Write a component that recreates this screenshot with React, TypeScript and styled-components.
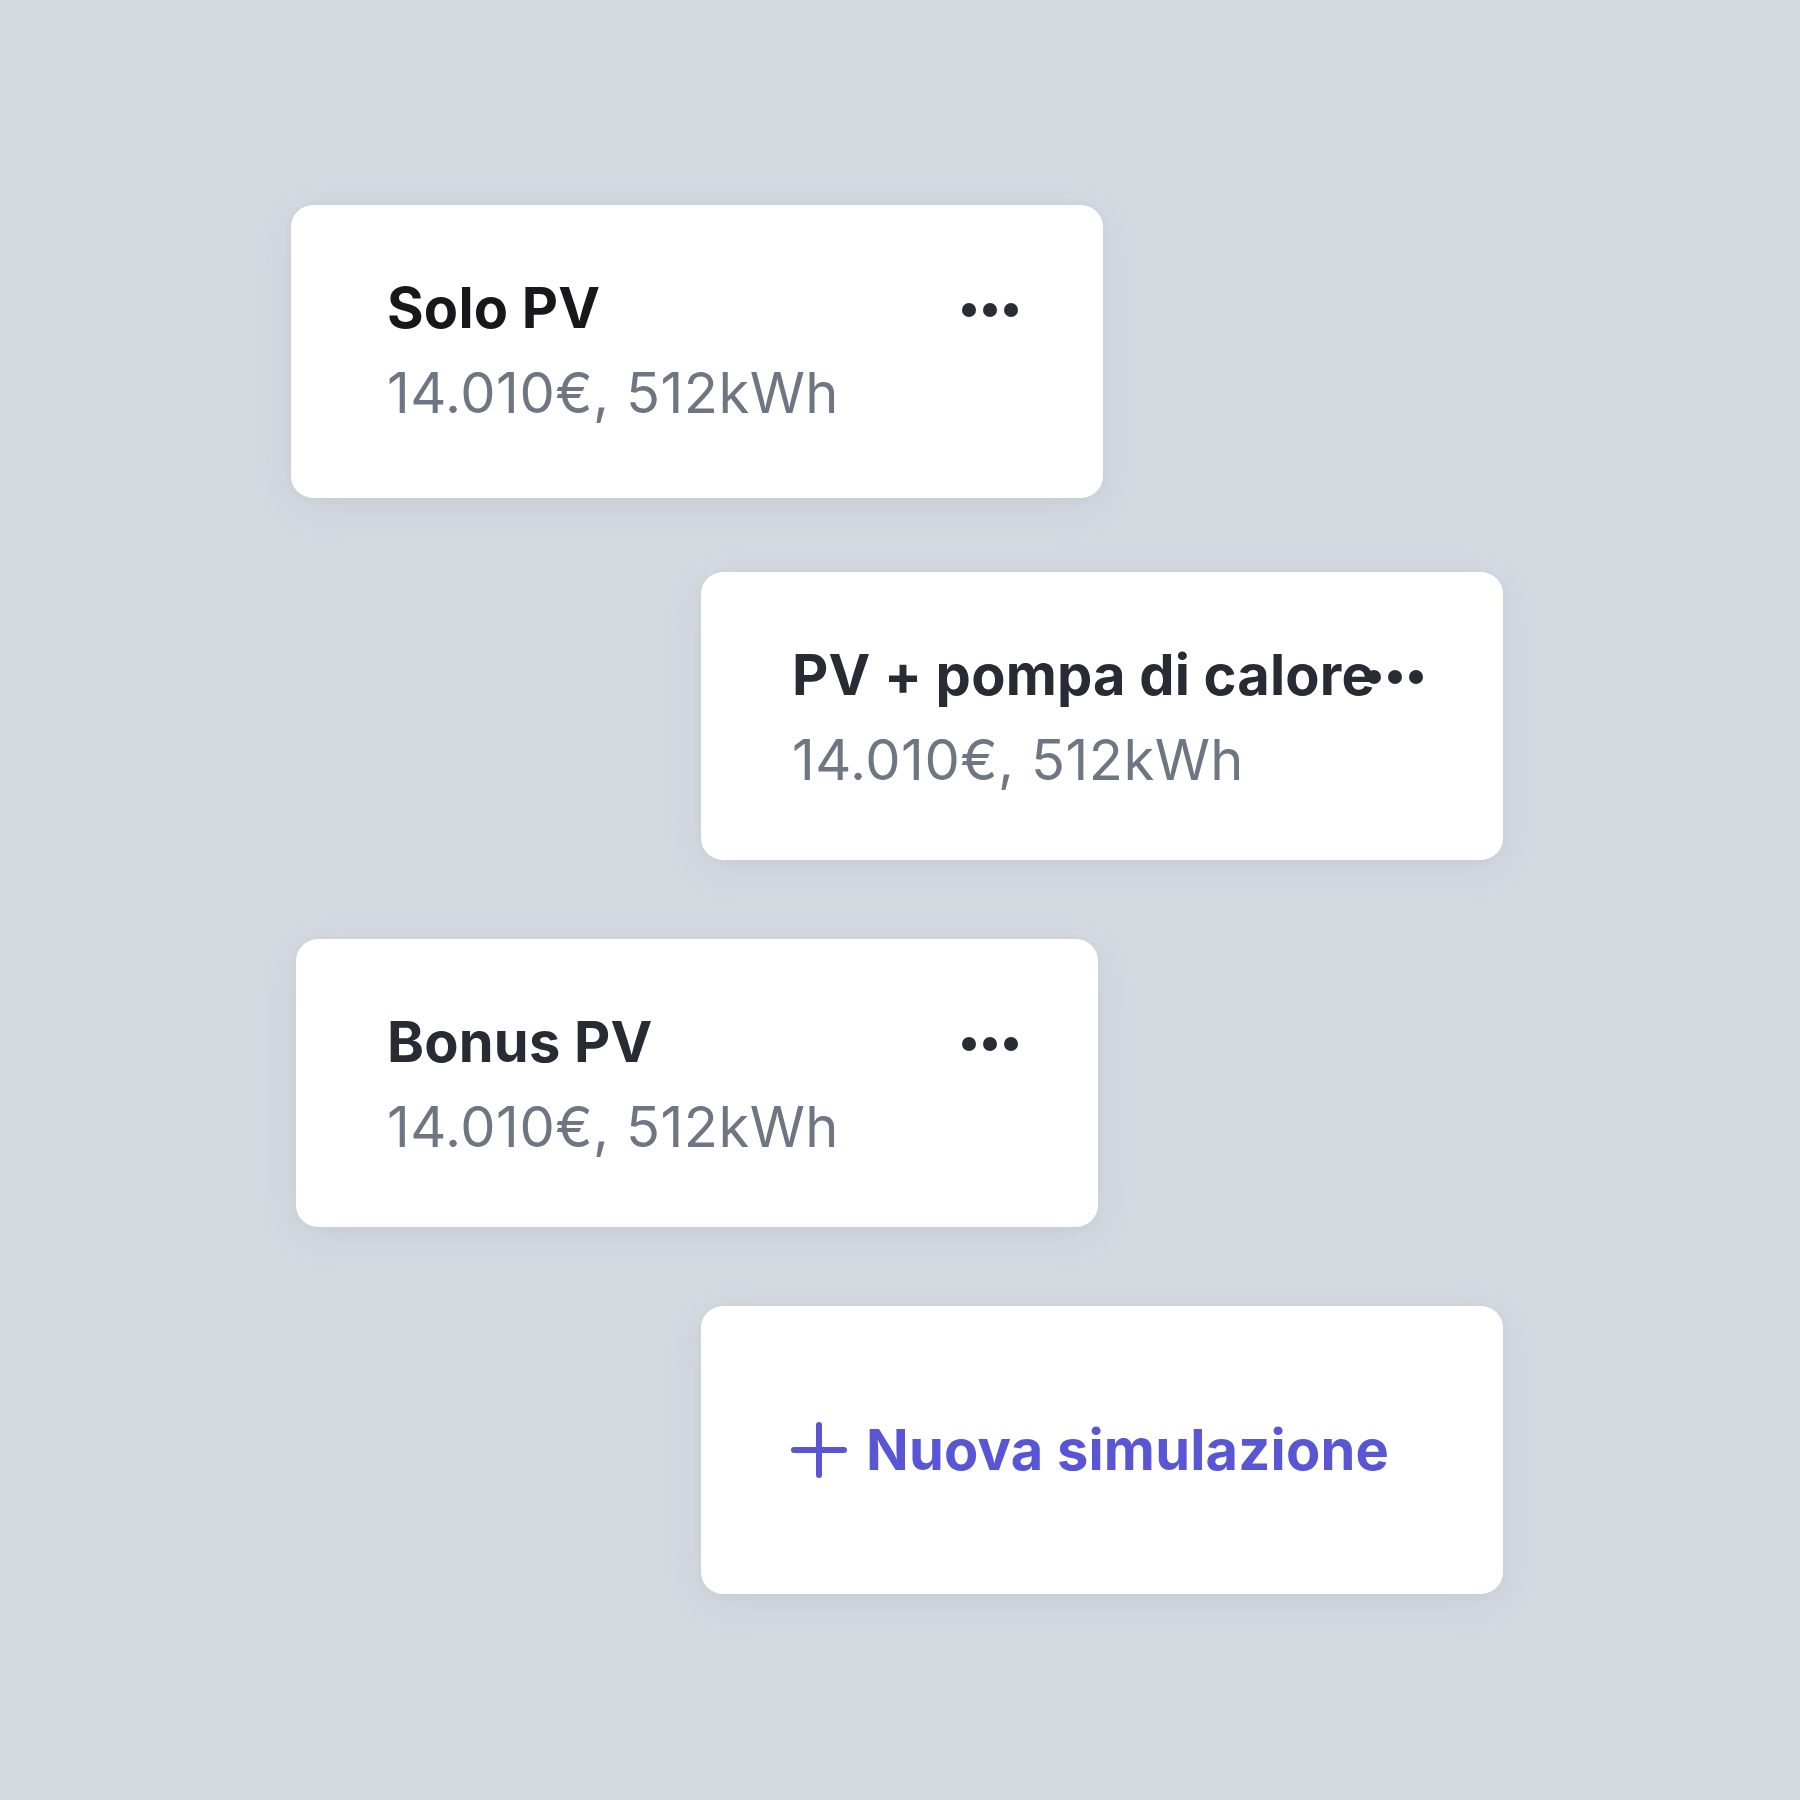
import React from "react";
import styled, { createGlobalStyle, css } from "styled-components";

const GlobalStyle = createGlobalStyle`
  html, body {
    margin: 0;
    padding: 0;
    background: #d5dae1;
  }
  * {
    box-sizing: border-box;
  }
`;

const Page = styled.main`
  min-height: 1800px;
  width: 1800px;
  padding-top: 205px;
  background: #d5dae1;
  font-family: Inter, "Noto Sans", "Liberation Sans", sans-serif;
`;

const Stack = styled.div`
  width: 1207px;
  margin-left: 296px;
  display: flex;
  flex-direction: column;
  gap: 79px;
`;

const CardBase = styled.div<{ $align: "start" | "end" }>`
  width: 802px;
  height: 288px;
  background: #ffffff;
  border-radius: 22px;
  box-shadow: 0 10px 48px rgba(70, 82, 100, 0.08), 0 2px 10px rgba(70, 82, 100, 0.04);
  align-self: ${(p) => (p.$align === "start" ? "flex-start" : "flex-end")};
`;

const ScenarioCard = styled(CardBase)<{ $selected?: boolean }>`
  padding: 70px 80px 0 91px;
  ${(p) =>
    p.$selected &&
    css`
      width: 812px;
      height: 293px;
      margin: 0 0 -5px -5px;
      padding: 70px 85px 0 96px;
    `}
`;

const TitleRow = styled.div`
  display: flex;
  align-items: center;
  height: 66px;
`;

const Title = styled.h2<{ $strong?: boolean }>`
  flex: 1;
  min-width: 0;
  margin: 0;
  white-space: nowrap;
  font-size: 56px;
  line-height: 66px;
  font-weight: 700;
  letter-spacing: 0.2px;
  color: ${(p) => (p.$strong ? "#18181c" : "#2a2a34")};
`;

const MoreButton = styled.span`
  flex-shrink: 0;
  display: flex;
  margin-top: 4px;
  color: #2b2b36;
`;

const Meta = styled.p`
  margin: 19px 0 0;
  font-size: 56px;
  line-height: 66px;
  font-weight: 400;
  letter-spacing: 0.5px;
  color: #6e7583;
  white-space: nowrap;
`;

const AddCard = styled(CardBase)`
  display: flex;
  align-items: center;
  gap: 19px;
  padding-left: 90px;
  color: #5956d6;
`;

const AddLabel = styled.span`
  font-size: 56px;
  line-height: 66px;
  font-weight: 700;
  letter-spacing: 0.2px;
  color: #5956d6;
`;

const Dots = () => (
  <svg width="56" height="14" viewBox="0 0 56 14" fill="currentColor" aria-hidden>
    <circle cx="7" cy="7" r="7" />
    <circle cx="28" cy="7" r="7" />
    <circle cx="49" cy="7" r="7" />
  </svg>
);

const Plus = () => (
  <svg width="56" height="56" viewBox="0 0 56 56" fill="none" stroke="currentColor" strokeWidth="6" strokeLinecap="round" aria-hidden>
    <line x1="28" y1="3" x2="28" y2="53" />
    <line x1="3" y1="28" x2="53" y2="28" />
  </svg>
);

type Scenario = { title: string; meta: string; align: "start" | "end"; selected?: boolean };

const scenarios: Scenario[] = [
  { title: "Solo PV", meta: "14.010€, 512kWh", align: "start", selected: true },
  { title: "PV + pompa di calore", meta: "14.010€, 512kWh", align: "end" },
  { title: "Bonus PV", meta: "14.010€, 512kWh", align: "start" },
];

export default function App() {
  return (
    <>
      <GlobalStyle />
      <Page>
        <Stack>
          {scenarios.map((s) => (
            <ScenarioCard key={s.title} $align={s.align} $selected={s.selected}>
              <TitleRow>
                <Title $strong={s.selected}>{s.title}</Title>
                <MoreButton>
                  <Dots />
                </MoreButton>
              </TitleRow>
              <Meta>{s.meta}</Meta>
            </ScenarioCard>
          ))}
          <AddCard $align="end">
            <Plus />
            <AddLabel>Nuova simulazione</AddLabel>
          </AddCard>
        </Stack>
      </Page>
    </>
  );
}
